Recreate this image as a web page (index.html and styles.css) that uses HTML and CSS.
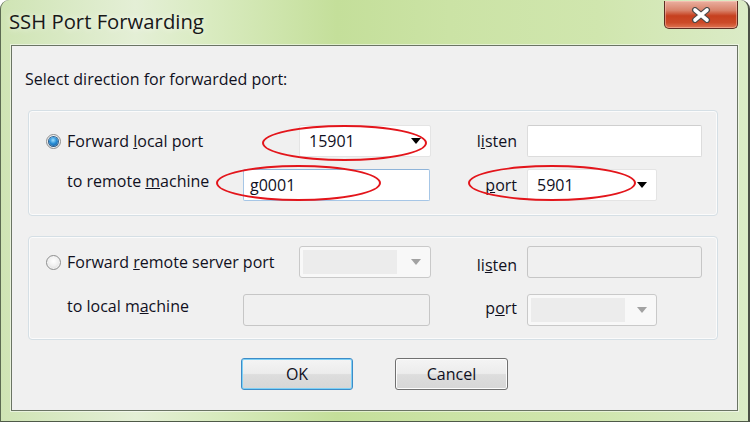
FILE: index.html
```html
<!DOCTYPE html>
<html>
<head>
<meta charset="utf-8">
<link rel="stylesheet" href="styles.css">
</head>
<body>
<div class="window">
  <div class="titlebar">
    <span class="title">SSH Port Forwarding</span>
    <div class="close">
      <svg width="22" height="16" viewBox="0 0 22 16">
        <path d="M5 3 L17 13 M17 3 L5 13" stroke="#4a4a4a" stroke-width="6" stroke-linecap="round"/>
        <path d="M5 3 L17 13 M17 3 L5 13" stroke="#ffffff" stroke-width="3.6" stroke-linecap="round"/>
      </svg>
    </div>
  </div>
  <div class="client">
    <div class="prompt">Select direction for forwarded port:</div>

    <div class="group g1">
      <div class="cell-radio"><span class="radio on"></span><span class="lbl">Forward <u>l</u>ocal port</span></div>
      <div class="combo c-local"><span class="val">15901</span><span class="arrow"></span></div>
      <div class="rlabel">l<u>i</u>sten</div>
      <div class="edit"></div>

      <div class="lbl indent up">to remote <u>m</u>achine</div>
      <div class="edit focus"><span class="val">g0001</span></div>
      <div class="rlabel"><u>p</u>ort</div>
      <div class="combo c-port"><span class="val">5901</span><span class="arrow"></span></div>
    </div>

    <div class="group g2">
      <div class="cell-radio"><span class="radio"></span><span class="lbl">Forward <u>r</u>emote server port</span></div>
      <div class="combo disabled c-local"><span class="inner"></span><span class="arrow gray"></span></div>
      <div class="rlabel down">li<u>s</u>ten</div>
      <div class="edit disabled"></div>

      <div class="lbl indent up">to local m<u>a</u>chine</div>
      <div class="edit disabled"></div>
      <div class="rlabel up2">p<u>o</u>rt</div>
      <div class="combo disabled c-port"><span class="inner"></span><span class="arrow gray"></span></div>
    </div>

    <div class="buttons">
      <button class="btn default">OK</button>
      <button class="btn">Cancel</button>
    </div>
  </div>

  <div class="mark m1"></div>
  <div class="mark m2"></div>
  <div class="mark m3"></div>
</div>
</body>
</html>
```

FILE: styles.css
```css
html, body {
  margin: 0;
  padding: 0;
  width: 750px;
  height: 422px;
  overflow: hidden;
}

body {
  font-family: "Open Sans", "Noto Sans", "Liberation Sans", sans-serif;
  color: #10101e;
}

.window {
  position: relative;
  box-sizing: border-box;
  width: 750px;
  height: 422px;
  display: flex;
  flex-direction: column;
  padding: 0 10px 10px 10px;
  border-radius: 9px 9px 0 0;
  border-left: 1px solid #5c6a52;
  border-right: 2px solid #4a4f46;
  border-bottom: 1px solid #4e5a48;
  background:
    linear-gradient(90deg, #cfe4b4 0%, #e4efd6 18%, #d9ebc0 28%, #c4df9a 45%, #cbe3a5 60%, #d0e6ae 80%, #dbebc7 100%);
}

.titlebar {
  height: 45px;
  display: flex;
  align-items: flex-start;
  justify-content: space-between;
  flex: none;
}

.title {
  margin-left: -2px;
  margin-top: 7px;
  font-size: 20.3px;
  line-height: 28px;
  color: #181818;
  text-shadow: 0 0 6px rgba(255,255,255,0.9);
}

.close {
  margin-top: 1px;
  margin-right: 0;
  width: 74px;
  height: 28px;
  box-sizing: border-box;
  border: 1px solid #5b2d22;
  border-top: none;
  border-radius: 0 0 5px 5px;
  background: linear-gradient(180deg, #eab0a0 0%, #d8826a 35%, #c6401f 55%, #cc4a28 80%, #de7452 100%);
  box-shadow: inset 0 0 0 1px rgba(255,210,200,0.45);
  display: flex;
  align-items: center;
  justify-content: center;
}

.client {
  flex: 1;
  box-sizing: border-box;
  background: #f0f0f0;
  border: 1px solid #6a7464;
  box-shadow: 0 0 0 1px rgba(255,255,255,0.5);
  padding: 0 0 0 16px;
  display: flex;
  flex-direction: column;
}

.prompt {
  margin-top: 22px;
  margin-left: -3px;
  font-size: 16px;
  line-height: 22px;
}

.group {
  box-sizing: border-box;
  width: 690px;
  border: 1px solid #d5dfe5;
  border-radius: 4px;
  box-shadow: inset 0 0 0 1px #fbfbfb;
  display: grid;
  grid-template-columns: 203px 187px 97px 175px;
  grid-template-rows: 32px 32px;
  padding-left: 11px;
  font-size: 16px;
}

.g1 {
  margin-top: 20px;
  height: 106px;
  padding-top: 14px;
  row-gap: 12px;
}

.g2 {
  margin-top: 20px;
  height: 104px;
  padding-top: 9px;
  row-gap: 16px;
}

.cell-radio {
  display: flex;
  align-items: center;
}

.radio {
  box-sizing: border-box;
  width: 15px;
  height: 15px;
  margin-left: 6px;
  margin-right: 6px;
  border-radius: 50%;
  border: 1px solid #8e8f8f;
  background: radial-gradient(circle at 50% 40%, #ffffff 0%, #f1f1f1 45%, #d2d2d2 100%);
  box-shadow: inset 0 0 0 1px #f4f4f4;
  position: relative;
  flex: none;
}

.radio.on::after {
  content: "";
  position: absolute;
  left: 2px;
  top: 2px;
  width: 9px;
  height: 9px;
  border-radius: 50%;
  background: radial-gradient(circle at 45% 35%, #9fe0ff 0%, #2a8fd6 45%, #0e4c8c 100%);
  box-shadow: 0 0 0 1px #2f5f8a;
}

.lbl {
  line-height: 22px;
  white-space: nowrap;
}

.indent {
  padding-left: 27px;
  align-self: center;
}

.up { margin-bottom: 8px; }
.down { margin-top: 6px; }
.up2 { margin-bottom: 5px; }

.rlabel {
  align-self: center;
  text-align: right;
  padding-right: 10px;
  line-height: 22px;
}

.combo, .edit {
  box-sizing: border-box;
  height: 32px;
  display: flex;
  align-items: center;
  position: relative;
}

.combo {
  background: #ffffff;
  border: 1px solid #e4e4e4;
  border-radius: 2px;
}

.c-local {
  width: 132px;
  justify-self: end;
  margin-right: -1px;
}

.c-port {
  width: 130px;
}

.combo .val {
  padding-left: 9px;
  flex: 1;
}

.arrow {
  width: 0;
  height: 0;
  border-left: 5px solid transparent;
  border-right: 5px solid transparent;
  border-top: 6px solid #000;
  margin-right: 9px;
  margin-left: auto;
}

.arrow.gray {
  border-top-color: #a2a2a2;
}

.edit {
  width: 100%;
  background: #ffffff;
  border: 1px solid #dcdcdc;
  border-top-color: #cfcfcf;
  border-radius: 2px;
}

.edit.focus {
  border: 1px solid #a6c6e6;
  border-top-color: #8fb4d9;
}

.edit .val {
  padding-left: 6px;
}

.edit.disabled {
  background: #f0f0f0;
  border: 1px solid #c6c6c6;
  border-radius: 3px;
}

.combo.disabled {
  background: #f8f8f8;
  border: 1px solid #c9c9c9;
  border-radius: 3px;
}

.combo.disabled .inner {
  width: 94px;
  height: 24px;
  margin-left: 3px;
  background: #ececec;
}

.buttons {
  margin-top: 18px;
  display: flex;
  justify-content: center;
  gap: 42px;
  padding-right: 16px;
}

.btn {
  box-sizing: border-box;
  width: 113px;
  height: 32px;
  font-family: inherit;
  font-size: 16px;
  color: #10101e;
  border: 1px solid #707070;
  border-radius: 3px;
  background: linear-gradient(180deg, #f4f4f4 0%, #ececec 48%, #dddddd 52%, #d6d6d6 100%);
  box-shadow: inset 0 0 0 1px #fcfcfc;
  padding: 0;
}

.btn.default {
  width: 112px;
  border-color: #3c8cc8;
  box-shadow: inset 0 0 0 1px #7fd0f5;
}

.mark {
  position: absolute;
  box-sizing: border-box;
  border: 2px solid #e3151b;
  border-radius: 50%;
}

.m1 { left: 261px; top: 125px; width: 165px; height: 36px; }
.m2 { left: 215px; top: 165px; width: 165px; height: 36px; }
.m3 { left: 467px; top: 165px; width: 168px; height: 36px; }
```
